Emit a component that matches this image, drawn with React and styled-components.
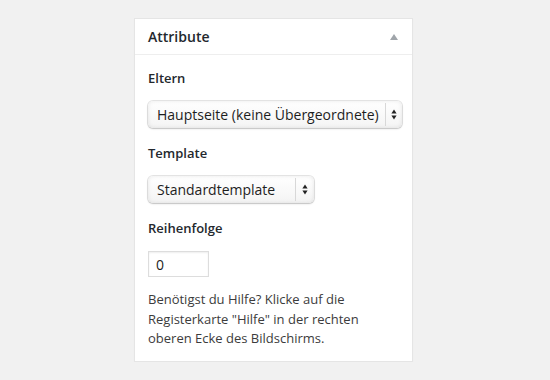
import React from "react";
import styled, { createGlobalStyle } from "styled-components";

const Global = createGlobalStyle`
  html, body { margin: 0; padding: 0; background: #f1f1f1; }
  body { font-family: "Open Sans", "Liberation Sans", sans-serif; color: #444; }
`;

const Page = styled.div`
  padding: 18px 0 0 134px;
`;

const Panel = styled.div`
  width: 277px;
  background: #fff;
  border: 1px solid #e5e5e5;
  box-shadow: 0 1px 1px rgba(0, 0, 0, 0.04);
  box-sizing: content-box;
`;

const Header = styled.div`
  height: 35px;
  border-bottom: 1px solid #eeeeee;
  display: flex;
  align-items: center;
  justify-content: space-between;
  padding: 0 14px 0 13px;
`;

const Title = styled.h2`
  margin: 0;
  font-size: 14px;
  font-weight: 600;
  color: #23282d;
  line-height: 1.4;
`;

const Toggle = styled.span`
  width: 0;
  height: 0;
  border-left: 4px solid transparent;
  border-right: 4px solid transparent;
  border-bottom: 6px solid #a0a5aa;
  margin-top: 1px;
`;

const Body = styled.div`
  padding: 14px 12px 0 13px;
  height: 292px;
`;

const Label = styled.p`
  margin: 0 0 14px;
  font-size: 13px;
  font-weight: 600;
  color: #23282d;
  line-height: 18px;
`;

const SelectBox = styled.div`
  display: flex;
  align-items: stretch;
  width: ${(p) => p.$w}px;
  height: 27px;
  box-sizing: border-box;
  border-radius: 5px;
  background: linear-gradient(#ffffff, #f4f4f4);
  box-shadow: 0 0 0 1px rgba(0, 0, 0, 0.1), 0 1px 2px rgba(0, 0, 0, 0.16),
    inset 0 0 4px rgba(0, 0, 0, 0.09);
  margin: 0 0 ${(p) => p.$mb}px;
`;

const SelectValue = styled.span`
  flex: 1;
  display: flex;
  align-items: center;
  padding-left: 9px;
  font-size: 14px;
  color: #1e1e1e;
  white-space: nowrap;
`;

const SelectDivider = styled.span`
  width: 1px;
  background: #d8d8d8;
  margin: 2px 0;
`;

const ArrowCell = styled.span`
  width: ${(p) => p.$cw}px;
  display: flex;
  align-items: center;
  justify-content: center;
`;

const Arrows = () => (
  <svg width="6" height="11" viewBox="0 0 6 11">
    <path d="M3 0.5 L5.6 4.4 L0.4 4.4 Z" fill="#222" />
    <path d="M3 10.5 L5.6 6.6 L0.4 6.6 Z" fill="#222" />
  </svg>
);

const NumberInput = styled.div`
  width: 61px;
  height: 26px;
  box-sizing: border-box;
  border: 1px solid #dddddd;
  box-shadow: inset 0 1px 2px rgba(0, 0, 0, 0.07);
  display: flex;
  align-items: center;
  padding-left: 7px;
  font-size: 14px;
  color: #1e1e1e;
  margin-bottom: 13px;
`;

const Help = styled.p`
  margin: 0;
  font-size: 13px;
  line-height: 19.5px;
  color: #3c3c3c;
`;

const Select = ({ w, cw, mb, children }) => (
  <SelectBox $w={w} $mb={mb}>
    <SelectValue>{children}</SelectValue>
    <SelectDivider />
    <ArrowCell $cw={cw}>
      <Arrows />
    </ArrowCell>
  </SelectBox>
);

export default function App() {
  return (
    <>
      <Global />
      <Page>
        <Panel>
          <Header>
            <Title>Attribute</Title>
            <Toggle />
          </Header>
          <Body>
            <Label>Eltern</Label>
            <Select w={254} cw={16} mb={16}>Hauptseite (keine Übergeordnete)</Select>
            <Label>Template</Label>
            <Select w={166} cw={18} mb={16}>Standardtemplate</Select>
            <Label>Reihenfolge</Label>
            <NumberInput>0</NumberInput>
            <Help>
              Benötigst du Hilfe? Klicke auf die Registerkarte "Hilfe" in der
              rechten oberen Ecke des Bildschirms.
            </Help>
          </Body>
        </Panel>
      </Page>
    </>
  );
}
